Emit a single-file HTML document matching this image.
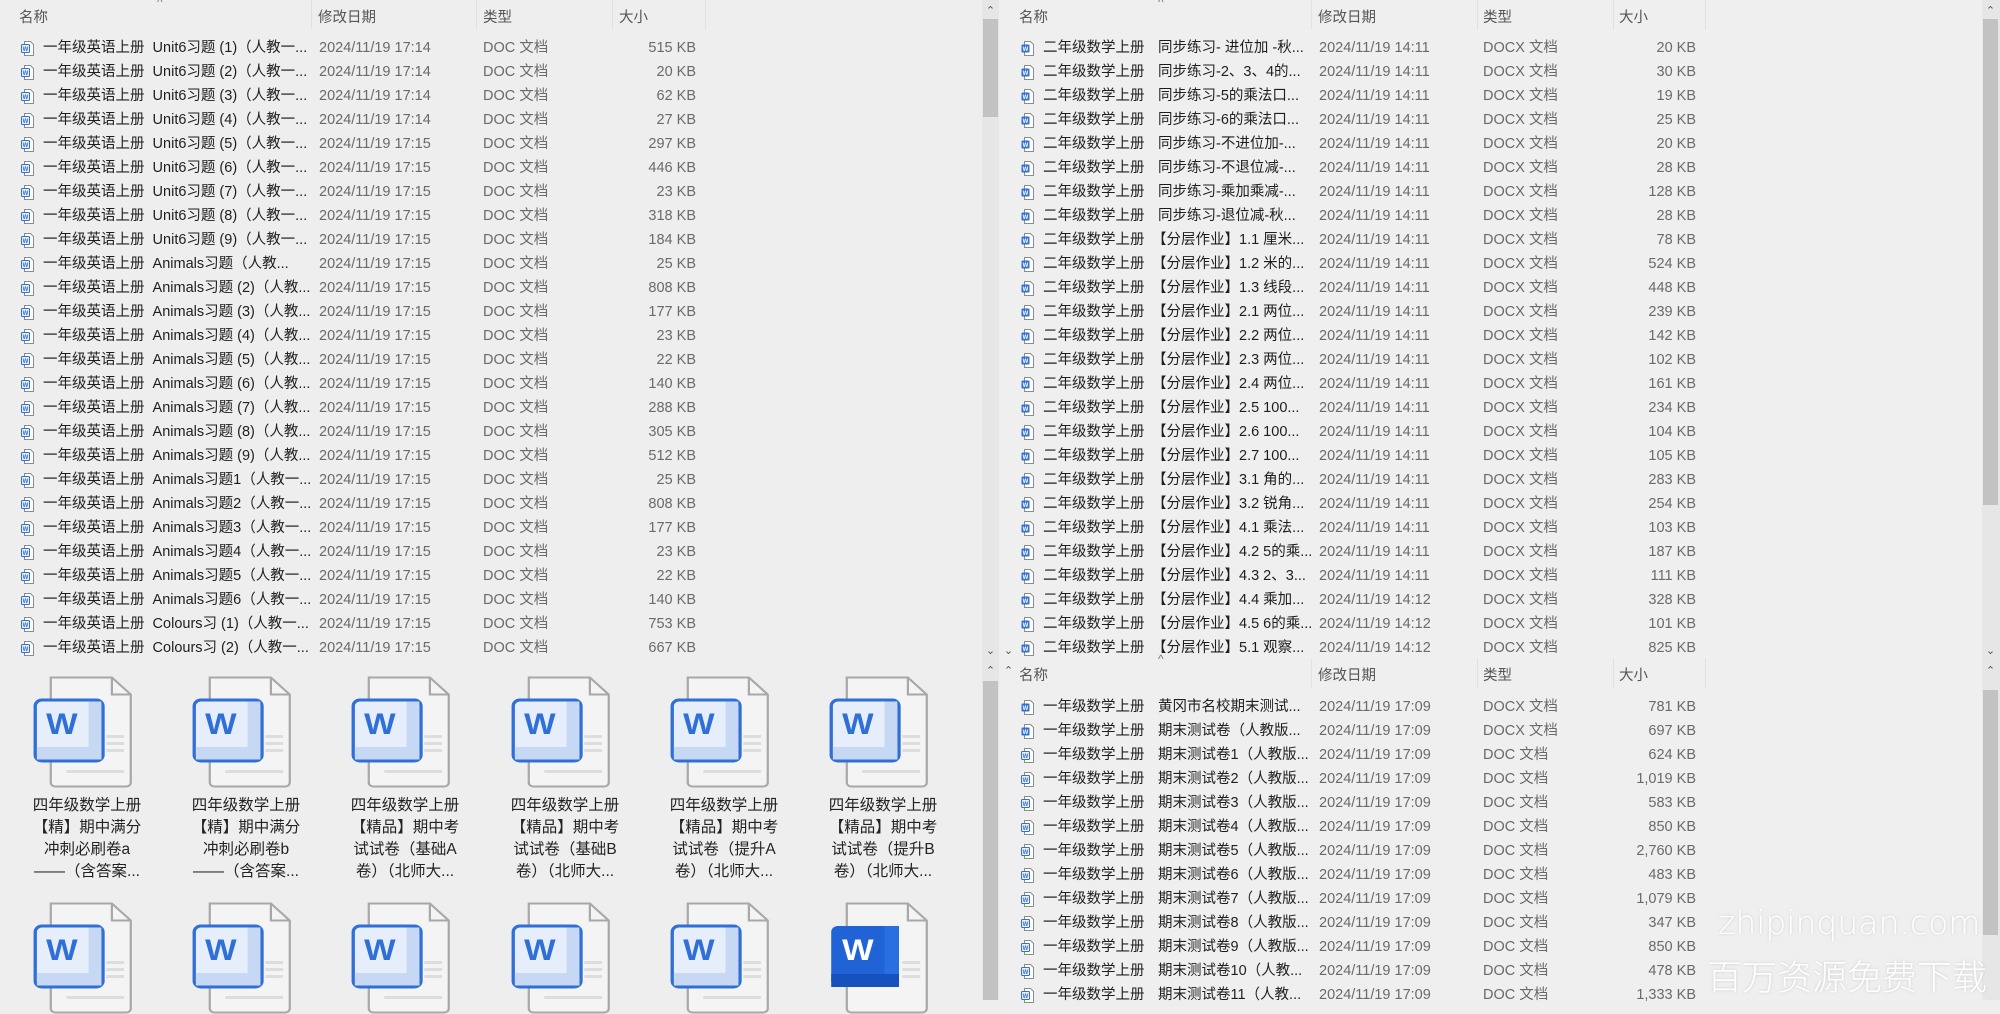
<!DOCTYPE html>
<html><head><meta charset="utf-8">
<style>
*{margin:0;padding:0;box-sizing:border-box}
body{width:2000px;height:1000px;overflow:hidden;background:#eeeeee;font-family:"Liberation Sans","Noto Sans CJK SC",sans-serif;font-size:14.5px;color:#1e1e1e;position:relative}
.abs{position:absolute}
.hdr{position:absolute;color:#555;font-size:14.5px;top:6px;white-space:nowrap}
.sep{position:absolute;top:0;width:1px;height:30px;background:#e2e2e2}
.list{position:absolute}
.r{height:24px;line-height:24px;position:relative;white-space:nowrap}
.r .i{position:absolute;top:5px;width:13px;height:15px}
.r span{position:absolute}
.g{color:#6a6a6a}
.sz{text-align:right;width:120px}
.sb{position:absolute;background:#e6e6e6;width:17px}
.th{position:absolute;background:#c2c2c2;width:15px;left:1px}
.ar{position:absolute;font-size:11px;color:#555;width:17px;text-align:center}
.big{position:absolute;width:140px;text-align:center;font-size:15.5px;line-height:22px;color:#222}
.wm{position:absolute;color:#fff;text-shadow:0 0 3px rgba(0,0,0,0.15);white-space:nowrap}
</style></head><body>
<svg width="0" height="0" style="position:absolute">
<defs>
<symbol id="doc" viewBox="0 0 13 15"><path d="M3.5 .5h6l3 3v11h-9z" fill="#fff" stroke="#8c8c8c"/><rect x=".5" y="3.5" width="8" height="8" rx="1" fill="#e8f0fc" stroke="#2f6fd6"/><text x="4.5" y="10" font-size="6" font-family="Liberation Sans" font-weight="bold" fill="#2f6fd6" text-anchor="middle">W</text></symbol>
<symbol id="docx" viewBox="0 0 13 15"><path d="M3.5 .5h6l3 3v11h-9z" fill="#fff" stroke="#8c8c8c"/><rect x=".5" y="3.5" width="8" height="8" rx="1" fill="#2f6fd6"/><text x="4.5" y="10" font-size="6" font-family="Liberation Sans" font-weight="bold" fill="#fff" text-anchor="middle">W</text></symbol>
<symbol id="bigdoc" viewBox="0 0 90 112"><path d="M16 1.5h55l17 17v88a4 4 0 0 1-4 4H20a4 4 0 0 1-4-4z" fill="#f4f4f4" stroke="#a8a8a8" stroke-width="2"/><path d="M71 1.5v17h17" fill="none" stroke="#a8a8a8" stroke-width="2"/><rect x="66" y="59" width="16" height="3" fill="#ddd"/><rect x="66" y="66" width="16" height="3" fill="#ddd"/><rect x="66" y="73" width="16" height="3" fill="#ddd"/><rect x="30" y="94" width="52" height="3" fill="#ddd"/><rect x="2" y="24" width="61" height="61" rx="6" fill="#e6eefb" stroke="#2f6fd6" stroke-width="3"/><rect x="50" y="25.5" width="11.5" height="58" fill="#c7d8f4"/><rect x="3.5" y="71" width="58" height="12.5" fill="#c7d8f4"/><text x="26" y="58" font-size="30" font-family="Liberation Sans" font-weight="bold" fill="#2f6fd6" text-anchor="middle">W</text></symbol>
<symbol id="bigdocb" viewBox="0 0 90 112"><path d="M16 1.5h55l17 17v88a4 4 0 0 1-4 4H20a4 4 0 0 1-4-4z" fill="#f4f4f4" stroke="#a8a8a8" stroke-width="2"/><path d="M71 1.5v17h17" fill="none" stroke="#a8a8a8" stroke-width="2"/><rect x="66" y="59" width="16" height="3" fill="#ddd"/><rect x="66" y="66" width="16" height="3" fill="#ddd"/><rect x="66" y="73" width="16" height="3" fill="#ddd"/><rect x="2" y="24" width="61" height="61" rx="6" fill="#1f63d6"/><rect x="50" y="24" width="13" height="61" fill="#2a6fe0"/><rect x="2" y="72" width="61" height="13" fill="#1552bd"/><text x="26" y="58" font-size="30" font-family="Liberation Sans" font-weight="bold" fill="#fff" text-anchor="middle">W</text></symbol>
</defs></svg>

<!-- LEFT PANE -->
<div class="hdr" style="left:19px">名称</div>
<div class="abs" style="left:157px;top:-5px;color:#777;font-size:12px">^</div>
<div class="sep" style="left:311px"></div><div class="hdr" style="left:318px">修改日期</div>
<div class="sep" style="left:476px"></div><div class="hdr" style="left:483px">类型</div>
<div class="sep" style="left:612px"></div><div class="hdr" style="left:619px">大小</div>
<div class="sep" style="left:705px"></div>

<div class="list" style="left:0;top:36px;width:980px">
<div class="r"><svg class="i" style="left:21px"><use href="#doc"/></svg><span style="left:43px">一年级英语上册&nbsp;&nbsp;Unit6习题 (1)（人教一...</span><span class="g" style="left:319px">2024/11/19 17:14</span><span class="g" style="left:483px">DOC 文档</span><span class="g sz" style="left:576px">515 KB</span></div>
<div class="r"><svg class="i" style="left:21px"><use href="#doc"/></svg><span style="left:43px">一年级英语上册&nbsp;&nbsp;Unit6习题 (2)（人教一...</span><span class="g" style="left:319px">2024/11/19 17:14</span><span class="g" style="left:483px">DOC 文档</span><span class="g sz" style="left:576px">20 KB</span></div>
<div class="r"><svg class="i" style="left:21px"><use href="#doc"/></svg><span style="left:43px">一年级英语上册&nbsp;&nbsp;Unit6习题 (3)（人教一...</span><span class="g" style="left:319px">2024/11/19 17:14</span><span class="g" style="left:483px">DOC 文档</span><span class="g sz" style="left:576px">62 KB</span></div>
<div class="r"><svg class="i" style="left:21px"><use href="#doc"/></svg><span style="left:43px">一年级英语上册&nbsp;&nbsp;Unit6习题 (4)（人教一...</span><span class="g" style="left:319px">2024/11/19 17:14</span><span class="g" style="left:483px">DOC 文档</span><span class="g sz" style="left:576px">27 KB</span></div>
<div class="r"><svg class="i" style="left:21px"><use href="#doc"/></svg><span style="left:43px">一年级英语上册&nbsp;&nbsp;Unit6习题 (5)（人教一...</span><span class="g" style="left:319px">2024/11/19 17:15</span><span class="g" style="left:483px">DOC 文档</span><span class="g sz" style="left:576px">297 KB</span></div>
<div class="r"><svg class="i" style="left:21px"><use href="#doc"/></svg><span style="left:43px">一年级英语上册&nbsp;&nbsp;Unit6习题 (6)（人教一...</span><span class="g" style="left:319px">2024/11/19 17:15</span><span class="g" style="left:483px">DOC 文档</span><span class="g sz" style="left:576px">446 KB</span></div>
<div class="r"><svg class="i" style="left:21px"><use href="#doc"/></svg><span style="left:43px">一年级英语上册&nbsp;&nbsp;Unit6习题 (7)（人教一...</span><span class="g" style="left:319px">2024/11/19 17:15</span><span class="g" style="left:483px">DOC 文档</span><span class="g sz" style="left:576px">23 KB</span></div>
<div class="r"><svg class="i" style="left:21px"><use href="#doc"/></svg><span style="left:43px">一年级英语上册&nbsp;&nbsp;Unit6习题 (8)（人教一...</span><span class="g" style="left:319px">2024/11/19 17:15</span><span class="g" style="left:483px">DOC 文档</span><span class="g sz" style="left:576px">318 KB</span></div>
<div class="r"><svg class="i" style="left:21px"><use href="#doc"/></svg><span style="left:43px">一年级英语上册&nbsp;&nbsp;Unit6习题 (9)（人教一...</span><span class="g" style="left:319px">2024/11/19 17:15</span><span class="g" style="left:483px">DOC 文档</span><span class="g sz" style="left:576px">184 KB</span></div>
<div class="r"><svg class="i" style="left:21px"><use href="#doc"/></svg><span style="left:43px">一年级英语上册&nbsp;&nbsp;Animals习题（人教...</span><span class="g" style="left:319px">2024/11/19 17:15</span><span class="g" style="left:483px">DOC 文档</span><span class="g sz" style="left:576px">25 KB</span></div>
<div class="r"><svg class="i" style="left:21px"><use href="#doc"/></svg><span style="left:43px">一年级英语上册&nbsp;&nbsp;Animals习题 (2)（人教...</span><span class="g" style="left:319px">2024/11/19 17:15</span><span class="g" style="left:483px">DOC 文档</span><span class="g sz" style="left:576px">808 KB</span></div>
<div class="r"><svg class="i" style="left:21px"><use href="#doc"/></svg><span style="left:43px">一年级英语上册&nbsp;&nbsp;Animals习题 (3)（人教...</span><span class="g" style="left:319px">2024/11/19 17:15</span><span class="g" style="left:483px">DOC 文档</span><span class="g sz" style="left:576px">177 KB</span></div>
<div class="r"><svg class="i" style="left:21px"><use href="#doc"/></svg><span style="left:43px">一年级英语上册&nbsp;&nbsp;Animals习题 (4)（人教...</span><span class="g" style="left:319px">2024/11/19 17:15</span><span class="g" style="left:483px">DOC 文档</span><span class="g sz" style="left:576px">23 KB</span></div>
<div class="r"><svg class="i" style="left:21px"><use href="#doc"/></svg><span style="left:43px">一年级英语上册&nbsp;&nbsp;Animals习题 (5)（人教...</span><span class="g" style="left:319px">2024/11/19 17:15</span><span class="g" style="left:483px">DOC 文档</span><span class="g sz" style="left:576px">22 KB</span></div>
<div class="r"><svg class="i" style="left:21px"><use href="#doc"/></svg><span style="left:43px">一年级英语上册&nbsp;&nbsp;Animals习题 (6)（人教...</span><span class="g" style="left:319px">2024/11/19 17:15</span><span class="g" style="left:483px">DOC 文档</span><span class="g sz" style="left:576px">140 KB</span></div>
<div class="r"><svg class="i" style="left:21px"><use href="#doc"/></svg><span style="left:43px">一年级英语上册&nbsp;&nbsp;Animals习题 (7)（人教...</span><span class="g" style="left:319px">2024/11/19 17:15</span><span class="g" style="left:483px">DOC 文档</span><span class="g sz" style="left:576px">288 KB</span></div>
<div class="r"><svg class="i" style="left:21px"><use href="#doc"/></svg><span style="left:43px">一年级英语上册&nbsp;&nbsp;Animals习题 (8)（人教...</span><span class="g" style="left:319px">2024/11/19 17:15</span><span class="g" style="left:483px">DOC 文档</span><span class="g sz" style="left:576px">305 KB</span></div>
<div class="r"><svg class="i" style="left:21px"><use href="#doc"/></svg><span style="left:43px">一年级英语上册&nbsp;&nbsp;Animals习题 (9)（人教...</span><span class="g" style="left:319px">2024/11/19 17:15</span><span class="g" style="left:483px">DOC 文档</span><span class="g sz" style="left:576px">512 KB</span></div>
<div class="r"><svg class="i" style="left:21px"><use href="#doc"/></svg><span style="left:43px">一年级英语上册&nbsp;&nbsp;Animals习题1（人教一...</span><span class="g" style="left:319px">2024/11/19 17:15</span><span class="g" style="left:483px">DOC 文档</span><span class="g sz" style="left:576px">25 KB</span></div>
<div class="r"><svg class="i" style="left:21px"><use href="#doc"/></svg><span style="left:43px">一年级英语上册&nbsp;&nbsp;Animals习题2（人教一...</span><span class="g" style="left:319px">2024/11/19 17:15</span><span class="g" style="left:483px">DOC 文档</span><span class="g sz" style="left:576px">808 KB</span></div>
<div class="r"><svg class="i" style="left:21px"><use href="#doc"/></svg><span style="left:43px">一年级英语上册&nbsp;&nbsp;Animals习题3（人教一...</span><span class="g" style="left:319px">2024/11/19 17:15</span><span class="g" style="left:483px">DOC 文档</span><span class="g sz" style="left:576px">177 KB</span></div>
<div class="r"><svg class="i" style="left:21px"><use href="#doc"/></svg><span style="left:43px">一年级英语上册&nbsp;&nbsp;Animals习题4（人教一...</span><span class="g" style="left:319px">2024/11/19 17:15</span><span class="g" style="left:483px">DOC 文档</span><span class="g sz" style="left:576px">23 KB</span></div>
<div class="r"><svg class="i" style="left:21px"><use href="#doc"/></svg><span style="left:43px">一年级英语上册&nbsp;&nbsp;Animals习题5（人教一...</span><span class="g" style="left:319px">2024/11/19 17:15</span><span class="g" style="left:483px">DOC 文档</span><span class="g sz" style="left:576px">22 KB</span></div>
<div class="r"><svg class="i" style="left:21px"><use href="#doc"/></svg><span style="left:43px">一年级英语上册&nbsp;&nbsp;Animals习题6（人教一...</span><span class="g" style="left:319px">2024/11/19 17:15</span><span class="g" style="left:483px">DOC 文档</span><span class="g sz" style="left:576px">140 KB</span></div>
<div class="r"><svg class="i" style="left:21px"><use href="#doc"/></svg><span style="left:43px">一年级英语上册&nbsp;&nbsp;Colours习 (1)（人教一...</span><span class="g" style="left:319px">2024/11/19 17:15</span><span class="g" style="left:483px">DOC 文档</span><span class="g sz" style="left:576px">753 KB</span></div>
<div class="r"><svg class="i" style="left:21px"><use href="#doc"/></svg><span style="left:43px">一年级英语上册&nbsp;&nbsp;Colours习 (2)（人教一...</span><span class="g" style="left:319px">2024/11/19 17:15</span><span class="g" style="left:483px">DOC 文档</span><span class="g sz" style="left:576px">667 KB</span></div>
</div>

<!-- left scrollbars -->
<div class="sb" style="left:982px;top:0;height:660px"></div>
<div class="ar" style="left:982px;top:4px">&#8963;</div>
<div class="th" style="left:983px;top:19px;height:98px"></div>
<div class="ar" style="left:982px;top:644px">&#8964;</div>
<div class="sb" style="left:982px;top:660px;height:340px"></div>
<div class="ar" style="left:982px;top:664px">&#8963;</div>
<div class="th" style="left:983px;top:681px;height:319px"></div>

<!-- big icons -->
<svg class="abs" style="left:33px;top:676px" width="100" height="112" viewBox="0 0 90 112" preserveAspectRatio="none"><use href="#bigdoc"/></svg>
<svg class="abs" style="left:192px;top:676px" width="100" height="112" viewBox="0 0 90 112" preserveAspectRatio="none"><use href="#bigdoc"/></svg>
<svg class="abs" style="left:351px;top:676px" width="100" height="112" viewBox="0 0 90 112" preserveAspectRatio="none"><use href="#bigdoc"/></svg>
<svg class="abs" style="left:511px;top:676px" width="100" height="112" viewBox="0 0 90 112" preserveAspectRatio="none"><use href="#bigdoc"/></svg>
<svg class="abs" style="left:670px;top:676px" width="100" height="112" viewBox="0 0 90 112" preserveAspectRatio="none"><use href="#bigdoc"/></svg>
<svg class="abs" style="left:829px;top:676px" width="100" height="112" viewBox="0 0 90 112" preserveAspectRatio="none"><use href="#bigdoc"/></svg>
<div class="big" style="left:17px;top:795px">四年级数学上册<br>【精】期中满分<br>冲刺必刷卷a<br>——（含答案...</div>
<div class="big" style="left:176px;top:795px">四年级数学上册<br>【精】期中满分<br>冲刺必刷卷b<br>——（含答案...</div>
<div class="big" style="left:335px;top:795px">四年级数学上册<br>【精品】期中考<br>试试卷（基础A<br>卷）（北师大...</div>
<div class="big" style="left:495px;top:795px">四年级数学上册<br>【精品】期中考<br>试试卷（基础B<br>卷）（北师大...</div>
<div class="big" style="left:654px;top:795px">四年级数学上册<br>【精品】期中考<br>试试卷（提升A<br>卷）（北师大...</div>
<div class="big" style="left:813px;top:795px">四年级数学上册<br>【精品】期中考<br>试试卷（提升B<br>卷）（北师大...</div>
<svg class="abs" style="left:33px;top:902px" width="100" height="112" viewBox="0 0 90 112" preserveAspectRatio="none"><use href="#bigdoc"/></svg>
<svg class="abs" style="left:192px;top:902px" width="100" height="112" viewBox="0 0 90 112" preserveAspectRatio="none"><use href="#bigdoc"/></svg>
<svg class="abs" style="left:351px;top:902px" width="100" height="112" viewBox="0 0 90 112" preserveAspectRatio="none"><use href="#bigdoc"/></svg>
<svg class="abs" style="left:511px;top:902px" width="100" height="112" viewBox="0 0 90 112" preserveAspectRatio="none"><use href="#bigdoc"/></svg>
<svg class="abs" style="left:670px;top:902px" width="100" height="112" viewBox="0 0 90 112" preserveAspectRatio="none"><use href="#bigdoc"/></svg>
<svg class="abs" style="left:829px;top:902px" width="100" height="112" viewBox="0 0 90 112" preserveAspectRatio="none"><use href="#bigdocb"/></svg>

<!-- RIGHT PANE top -->
<div class="abs" style="left:1000px;top:0;width:982px;height:1000px;background:#efefef"></div>
<div class="hdr" style="left:1019px">名称</div>
<div class="abs" style="left:1158px;top:-5px;color:#777;font-size:12px">^</div>
<div class="sep" style="left:1311px"></div><div class="hdr" style="left:1318px">修改日期</div>
<div class="sep" style="left:1477px"></div><div class="hdr" style="left:1483px">类型</div>
<div class="sep" style="left:1613px"></div><div class="hdr" style="left:1619px">大小</div>
<div class="sep" style="left:1705px"></div>

<div class="list" style="left:1000px;top:36px;width:980px">
<div class="r"><svg class="i" style="left:21px"><use href="#docx"/></svg><span style="left:43px">二年级数学上册</span><span style="left:158px">同步练习- 进位加 -秋...</span><span class="g" style="left:319px">2024/11/19 14:11</span><span class="g" style="left:483px">DOCX 文档</span><span class="g sz" style="left:576px">20 KB</span></div>
<div class="r"><svg class="i" style="left:21px"><use href="#docx"/></svg><span style="left:43px">二年级数学上册</span><span style="left:158px">同步练习-2、3、4的...</span><span class="g" style="left:319px">2024/11/19 14:11</span><span class="g" style="left:483px">DOCX 文档</span><span class="g sz" style="left:576px">30 KB</span></div>
<div class="r"><svg class="i" style="left:21px"><use href="#docx"/></svg><span style="left:43px">二年级数学上册</span><span style="left:158px">同步练习-5的乘法口...</span><span class="g" style="left:319px">2024/11/19 14:11</span><span class="g" style="left:483px">DOCX 文档</span><span class="g sz" style="left:576px">19 KB</span></div>
<div class="r"><svg class="i" style="left:21px"><use href="#docx"/></svg><span style="left:43px">二年级数学上册</span><span style="left:158px">同步练习-6的乘法口...</span><span class="g" style="left:319px">2024/11/19 14:11</span><span class="g" style="left:483px">DOCX 文档</span><span class="g sz" style="left:576px">25 KB</span></div>
<div class="r"><svg class="i" style="left:21px"><use href="#docx"/></svg><span style="left:43px">二年级数学上册</span><span style="left:158px">同步练习-不进位加-...</span><span class="g" style="left:319px">2024/11/19 14:11</span><span class="g" style="left:483px">DOCX 文档</span><span class="g sz" style="left:576px">20 KB</span></div>
<div class="r"><svg class="i" style="left:21px"><use href="#docx"/></svg><span style="left:43px">二年级数学上册</span><span style="left:158px">同步练习-不退位减-...</span><span class="g" style="left:319px">2024/11/19 14:11</span><span class="g" style="left:483px">DOCX 文档</span><span class="g sz" style="left:576px">28 KB</span></div>
<div class="r"><svg class="i" style="left:21px"><use href="#docx"/></svg><span style="left:43px">二年级数学上册</span><span style="left:158px">同步练习-乘加乘减-...</span><span class="g" style="left:319px">2024/11/19 14:11</span><span class="g" style="left:483px">DOCX 文档</span><span class="g sz" style="left:576px">128 KB</span></div>
<div class="r"><svg class="i" style="left:21px"><use href="#docx"/></svg><span style="left:43px">二年级数学上册</span><span style="left:158px">同步练习-退位减-秋...</span><span class="g" style="left:319px">2024/11/19 14:11</span><span class="g" style="left:483px">DOCX 文档</span><span class="g sz" style="left:576px">28 KB</span></div>
<div class="r"><svg class="i" style="left:21px"><use href="#docx"/></svg><span style="left:43px">二年级数学上册</span><span style="left:152px">【分层作业】1.1 厘米...</span><span class="g" style="left:319px">2024/11/19 14:11</span><span class="g" style="left:483px">DOCX 文档</span><span class="g sz" style="left:576px">78 KB</span></div>
<div class="r"><svg class="i" style="left:21px"><use href="#docx"/></svg><span style="left:43px">二年级数学上册</span><span style="left:152px">【分层作业】1.2 米的...</span><span class="g" style="left:319px">2024/11/19 14:11</span><span class="g" style="left:483px">DOCX 文档</span><span class="g sz" style="left:576px">524 KB</span></div>
<div class="r"><svg class="i" style="left:21px"><use href="#docx"/></svg><span style="left:43px">二年级数学上册</span><span style="left:152px">【分层作业】1.3 线段...</span><span class="g" style="left:319px">2024/11/19 14:11</span><span class="g" style="left:483px">DOCX 文档</span><span class="g sz" style="left:576px">448 KB</span></div>
<div class="r"><svg class="i" style="left:21px"><use href="#docx"/></svg><span style="left:43px">二年级数学上册</span><span style="left:152px">【分层作业】2.1 两位...</span><span class="g" style="left:319px">2024/11/19 14:11</span><span class="g" style="left:483px">DOCX 文档</span><span class="g sz" style="left:576px">239 KB</span></div>
<div class="r"><svg class="i" style="left:21px"><use href="#docx"/></svg><span style="left:43px">二年级数学上册</span><span style="left:152px">【分层作业】2.2 两位...</span><span class="g" style="left:319px">2024/11/19 14:11</span><span class="g" style="left:483px">DOCX 文档</span><span class="g sz" style="left:576px">142 KB</span></div>
<div class="r"><svg class="i" style="left:21px"><use href="#docx"/></svg><span style="left:43px">二年级数学上册</span><span style="left:152px">【分层作业】2.3 两位...</span><span class="g" style="left:319px">2024/11/19 14:11</span><span class="g" style="left:483px">DOCX 文档</span><span class="g sz" style="left:576px">102 KB</span></div>
<div class="r"><svg class="i" style="left:21px"><use href="#docx"/></svg><span style="left:43px">二年级数学上册</span><span style="left:152px">【分层作业】2.4 两位...</span><span class="g" style="left:319px">2024/11/19 14:11</span><span class="g" style="left:483px">DOCX 文档</span><span class="g sz" style="left:576px">161 KB</span></div>
<div class="r"><svg class="i" style="left:21px"><use href="#docx"/></svg><span style="left:43px">二年级数学上册</span><span style="left:152px">【分层作业】2.5 100...</span><span class="g" style="left:319px">2024/11/19 14:11</span><span class="g" style="left:483px">DOCX 文档</span><span class="g sz" style="left:576px">234 KB</span></div>
<div class="r"><svg class="i" style="left:21px"><use href="#docx"/></svg><span style="left:43px">二年级数学上册</span><span style="left:152px">【分层作业】2.6 100...</span><span class="g" style="left:319px">2024/11/19 14:11</span><span class="g" style="left:483px">DOCX 文档</span><span class="g sz" style="left:576px">104 KB</span></div>
<div class="r"><svg class="i" style="left:21px"><use href="#docx"/></svg><span style="left:43px">二年级数学上册</span><span style="left:152px">【分层作业】2.7 100...</span><span class="g" style="left:319px">2024/11/19 14:11</span><span class="g" style="left:483px">DOCX 文档</span><span class="g sz" style="left:576px">105 KB</span></div>
<div class="r"><svg class="i" style="left:21px"><use href="#docx"/></svg><span style="left:43px">二年级数学上册</span><span style="left:152px">【分层作业】3.1 角的...</span><span class="g" style="left:319px">2024/11/19 14:11</span><span class="g" style="left:483px">DOCX 文档</span><span class="g sz" style="left:576px">283 KB</span></div>
<div class="r"><svg class="i" style="left:21px"><use href="#docx"/></svg><span style="left:43px">二年级数学上册</span><span style="left:152px">【分层作业】3.2 锐角...</span><span class="g" style="left:319px">2024/11/19 14:11</span><span class="g" style="left:483px">DOCX 文档</span><span class="g sz" style="left:576px">254 KB</span></div>
<div class="r"><svg class="i" style="left:21px"><use href="#docx"/></svg><span style="left:43px">二年级数学上册</span><span style="left:152px">【分层作业】4.1 乘法...</span><span class="g" style="left:319px">2024/11/19 14:11</span><span class="g" style="left:483px">DOCX 文档</span><span class="g sz" style="left:576px">103 KB</span></div>
<div class="r"><svg class="i" style="left:21px"><use href="#docx"/></svg><span style="left:43px">二年级数学上册</span><span style="left:152px">【分层作业】4.2 5的乘...</span><span class="g" style="left:319px">2024/11/19 14:11</span><span class="g" style="left:483px">DOCX 文档</span><span class="g sz" style="left:576px">187 KB</span></div>
<div class="r"><svg class="i" style="left:21px"><use href="#docx"/></svg><span style="left:43px">二年级数学上册</span><span style="left:152px">【分层作业】4.3 2、3...</span><span class="g" style="left:319px">2024/11/19 14:11</span><span class="g" style="left:483px">DOCX 文档</span><span class="g sz" style="left:576px">111 KB</span></div>
<div class="r"><svg class="i" style="left:21px"><use href="#docx"/></svg><span style="left:43px">二年级数学上册</span><span style="left:152px">【分层作业】4.4 乘加...</span><span class="g" style="left:319px">2024/11/19 14:12</span><span class="g" style="left:483px">DOCX 文档</span><span class="g sz" style="left:576px">328 KB</span></div>
<div class="r"><svg class="i" style="left:21px"><use href="#docx"/></svg><span style="left:43px">二年级数学上册</span><span style="left:152px">【分层作业】4.5 6的乘...</span><span class="g" style="left:319px">2024/11/19 14:12</span><span class="g" style="left:483px">DOCX 文档</span><span class="g sz" style="left:576px">101 KB</span></div>
<div class="r"><svg class="i" style="left:21px"><use href="#docx"/></svg><span style="left:43px">二年级数学上册</span><span style="left:152px">【分层作业】5.1 观察...</span><span class="g" style="left:319px">2024/11/19 14:12</span><span class="g" style="left:483px">DOCX 文档</span><span class="g sz" style="left:576px">825 KB</span></div>
</div>

<!-- right bottom header -->
<div class="hdr" style="left:1019px;top:664px">名称</div>
<div class="abs" style="left:1158px;top:652px;color:#777;font-size:12px">^</div>
<div class="sep" style="left:1311px;top:658px"></div><div class="hdr" style="left:1318px;top:664px">修改日期</div>
<div class="sep" style="left:1477px;top:658px"></div><div class="hdr" style="left:1483px;top:664px">类型</div>
<div class="sep" style="left:1613px;top:658px"></div><div class="hdr" style="left:1619px;top:664px">大小</div>
<div class="sep" style="left:1705px;top:658px"></div>
<div class="ar" style="left:1000px;top:644px">&#8964;</div>
<div class="ar" style="left:1000px;top:664px">&#8963;</div>

<div class="list" style="left:1000px;top:695px;width:980px">
<div class="r"><svg class="i" style="left:21px"><use href="#docx"/></svg><span style="left:43px">一年级数学上册</span><span style="left:158px">黄冈市名校期末测试...</span><span class="g" style="left:319px">2024/11/19 17:09</span><span class="g" style="left:483px">DOCX 文档</span><span class="g sz" style="left:576px">781 KB</span></div>
<div class="r"><svg class="i" style="left:21px"><use href="#docx"/></svg><span style="left:43px">一年级数学上册</span><span style="left:158px">期末测试卷（人教版...</span><span class="g" style="left:319px">2024/11/19 17:09</span><span class="g" style="left:483px">DOCX 文档</span><span class="g sz" style="left:576px">697 KB</span></div>
<div class="r"><svg class="i" style="left:21px"><use href="#doc"/></svg><span style="left:43px">一年级数学上册</span><span style="left:158px">期末测试卷1（人教版...</span><span class="g" style="left:319px">2024/11/19 17:09</span><span class="g" style="left:483px">DOC 文档</span><span class="g sz" style="left:576px">624 KB</span></div>
<div class="r"><svg class="i" style="left:21px"><use href="#doc"/></svg><span style="left:43px">一年级数学上册</span><span style="left:158px">期末测试卷2（人教版...</span><span class="g" style="left:319px">2024/11/19 17:09</span><span class="g" style="left:483px">DOC 文档</span><span class="g sz" style="left:576px">1,019 KB</span></div>
<div class="r"><svg class="i" style="left:21px"><use href="#doc"/></svg><span style="left:43px">一年级数学上册</span><span style="left:158px">期末测试卷3（人教版...</span><span class="g" style="left:319px">2024/11/19 17:09</span><span class="g" style="left:483px">DOC 文档</span><span class="g sz" style="left:576px">583 KB</span></div>
<div class="r"><svg class="i" style="left:21px"><use href="#doc"/></svg><span style="left:43px">一年级数学上册</span><span style="left:158px">期末测试卷4（人教版...</span><span class="g" style="left:319px">2024/11/19 17:09</span><span class="g" style="left:483px">DOC 文档</span><span class="g sz" style="left:576px">850 KB</span></div>
<div class="r"><svg class="i" style="left:21px"><use href="#doc"/></svg><span style="left:43px">一年级数学上册</span><span style="left:158px">期末测试卷5（人教版...</span><span class="g" style="left:319px">2024/11/19 17:09</span><span class="g" style="left:483px">DOC 文档</span><span class="g sz" style="left:576px">2,760 KB</span></div>
<div class="r"><svg class="i" style="left:21px"><use href="#doc"/></svg><span style="left:43px">一年级数学上册</span><span style="left:158px">期末测试卷6（人教版...</span><span class="g" style="left:319px">2024/11/19 17:09</span><span class="g" style="left:483px">DOC 文档</span><span class="g sz" style="left:576px">483 KB</span></div>
<div class="r"><svg class="i" style="left:21px"><use href="#doc"/></svg><span style="left:43px">一年级数学上册</span><span style="left:158px">期末测试卷7（人教版...</span><span class="g" style="left:319px">2024/11/19 17:09</span><span class="g" style="left:483px">DOC 文档</span><span class="g sz" style="left:576px">1,079 KB</span></div>
<div class="r"><svg class="i" style="left:21px"><use href="#doc"/></svg><span style="left:43px">一年级数学上册</span><span style="left:158px">期末测试卷8（人教版...</span><span class="g" style="left:319px">2024/11/19 17:09</span><span class="g" style="left:483px">DOC 文档</span><span class="g sz" style="left:576px">347 KB</span></div>
<div class="r"><svg class="i" style="left:21px"><use href="#doc"/></svg><span style="left:43px">一年级数学上册</span><span style="left:158px">期末测试卷9（人教版...</span><span class="g" style="left:319px">2024/11/19 17:09</span><span class="g" style="left:483px">DOC 文档</span><span class="g sz" style="left:576px">850 KB</span></div>
<div class="r"><svg class="i" style="left:21px"><use href="#doc"/></svg><span style="left:43px">一年级数学上册</span><span style="left:158px">期末测试卷10（人教...</span><span class="g" style="left:319px">2024/11/19 17:09</span><span class="g" style="left:483px">DOC 文档</span><span class="g sz" style="left:576px">478 KB</span></div>
<div class="r"><svg class="i" style="left:21px"><use href="#doc"/></svg><span style="left:43px">一年级数学上册</span><span style="left:158px">期末测试卷11（人教...</span><span class="g" style="left:319px">2024/11/19 17:09</span><span class="g" style="left:483px">DOC 文档</span><span class="g sz" style="left:576px">1,333 KB</span></div>
</div>

<!-- right scrollbars -->
<div class="sb" style="left:1982px;top:0;height:1000px;width:18px"></div>
<div class="ar" style="left:1982px;top:4px">&#8963;</div>
<div class="th" style="left:1983px;top:19px;height:486px"></div>
<div class="ar" style="left:1982px;top:644px">&#8964;</div>
<div class="ar" style="left:1982px;top:664px">&#8963;</div>
<div class="th" style="left:1983px;top:690px;height:245px"></div>

<!-- watermark -->
<div class="wm" style="left:1718px;top:903px;font-size:33px;font-family:'DejaVu Sans','Liberation Sans',sans-serif;font-weight:300">zhipinquan.com</div>
<div class="wm" style="left:1707px;top:950px;font-size:35px;letter-spacing:0;font-family:'Noto Sans CJK SC',sans-serif;font-weight:300">百万资源免费下载</div>
</body></html>
